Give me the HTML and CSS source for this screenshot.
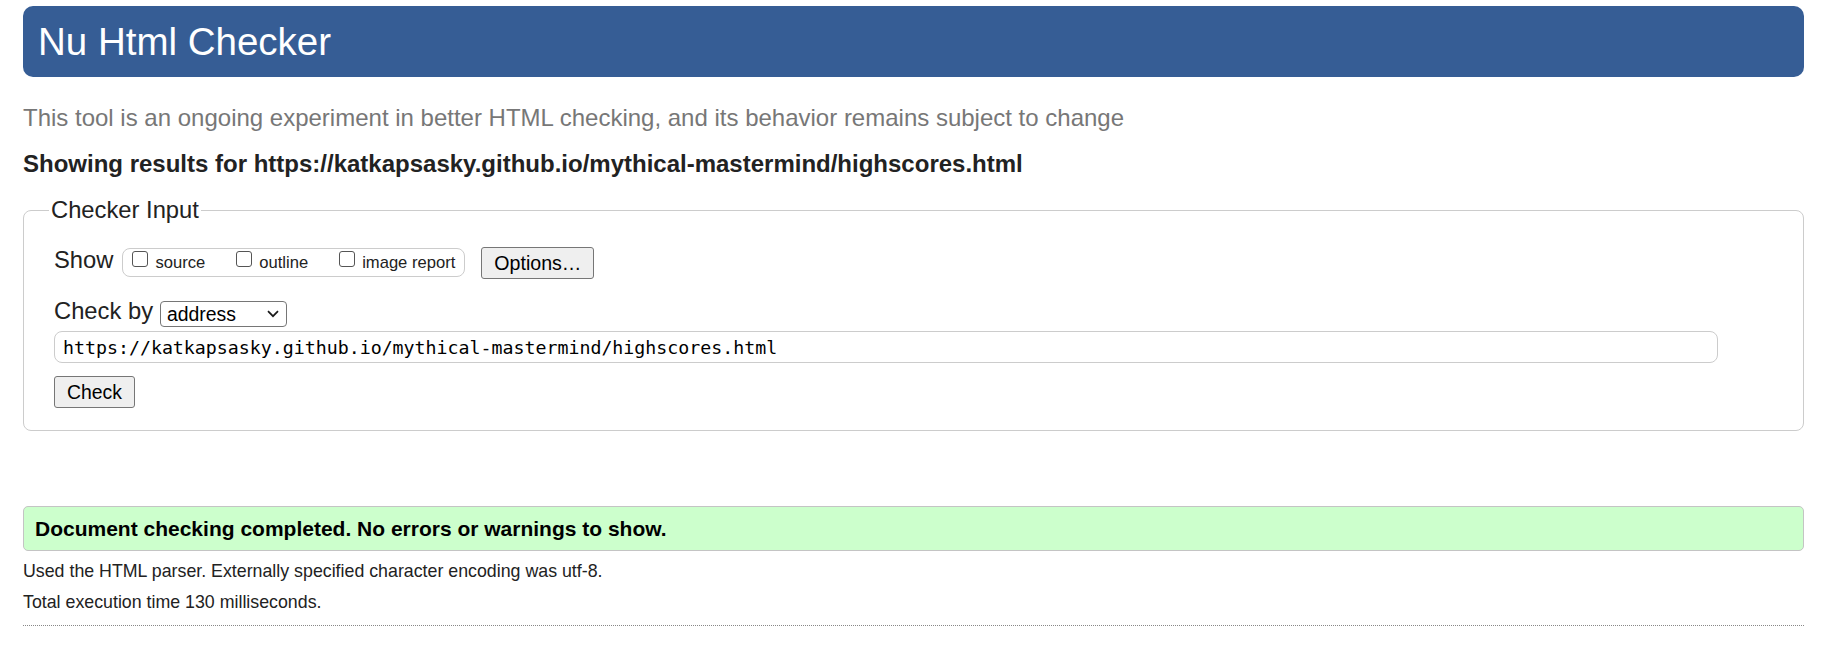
FILE: index.html
```html
<!DOCTYPE html>
<html lang="en">
<head>
<meta charset="utf-8">
<title>Nu Html Checker</title>
<link rel="stylesheet" href="styles.css">
</head>
<body>
<div class="page">
  <header class="masthead"><h1>Nu Html Checker</h1></header>
  <p class="tagline">This tool is an ongoing experiment in better HTML checking, and its behavior remains subject to change</p>
  <p class="results-for">Showing results for https://katkapsasky.github.io/mythical-mastermind/highscores.html</p>
  <form class="checker-form">
    <fieldset class="checker">
      <legend>Checker Input</legend>
      <div class="row show-row">
        <span class="row-label">Show</span>
        <span class="opts">
          <label><input type="checkbox">source</label>
          <label><input type="checkbox">outline</label>
          <label><input type="checkbox">image report</label>
        </span>
        <button type="button" class="btn options-btn">Options…</button>
      </div>
      <div class="row by-row">
        <label class="row-label by-label">Check by</label>
        <span class="select-wrap">
          <select class="by-select"><option>address</option></select>
          <svg class="chevron" width="12" height="8" viewBox="0 0 12 8" aria-hidden="true"><path d="M1 1.2 L6 6.2 L11 1.2" fill="none" stroke="#1a1a1a" stroke-width="1.7"/></svg>
        </span>
      </div>
      <input class="url" type="url" value="https://katkapsasky.github.io/mythical-mastermind/highscores.html">
      <button type="button" class="btn check-btn">Check</button>
    </fieldset>
  </form>
  <div class="success">Document checking completed. No errors or warnings to show.</div>
  <p class="details">Used the HTML parser. Externally specified character encoding was utf-8.</p>
  <p class="details">Total execution time 130 milliseconds.</p>
  <hr class="dotted">
</div>
</body>
</html>
```
FILE: styles.css
```css
html, body {
  margin: 0;
  background: #fff;
}
body {
  font-family: "Liberation Sans", Arial, sans-serif;
  color: #222;
}
.page {
  padding: 6px 36px 0 23px;
}
.masthead {
  height: 71px;
  background: #365d95;
  border-radius: 10px;
  display: flex;
  align-items: center;
  padding-left: 15px;
}
.masthead h1 {
  margin: 0;
  font-weight: normal;
  font-size: 38.5px;
  line-height: 71px;
  color: #fff;
}
.tagline {
  margin: 26px 0 0;
  font-size: 24px;
  line-height: 30px;
  color: #777;
}
.results-for {
  margin: 17px 0 0;
  font-weight: bold;
  font-size: 24px;
  line-height: 28px;
  color: #222;
}
.checker-form {
  margin: 18px 0 0;
}
.checker {
  margin: 0;
  min-width: 0;
  border: 1px solid #ccc;
  border-radius: 8px;
  padding: 0 30px 22px;
}
.checker legend {
  padding: 0 2px;
  margin-left: -5px;
  font-size: 23.75px;
  line-height: 28px;
  color: #222;
}
.row {
  display: flex;
  align-items: flex-start;
}
.show-row {
  margin-top: 23px;
}
.row-label {
  font-size: 23.75px;
  line-height: 26px;
}
.opts {
  margin: 1px 0 0 9px;
  height: 29px;
  box-sizing: border-box;
  border: 1px solid #ccc;
  border-radius: 8px;
  padding: 0 9px;
  display: flex;
  align-items: flex-start;
}
.opts label {
  display: flex;
  align-items: flex-start;
  font-size: 16.6px;
  line-height: 27px;
  margin-right: 31px;
}
.opts label:last-child {
  margin-right: 0;
}
.opts input {
  -webkit-appearance: none;
  appearance: none;
  width: 16px;
  height: 16px;
  box-sizing: border-box;
  margin: 2px 7px 0 0;
  border: 1px solid #555;
  border-radius: 3px;
  background: #fff;
}
.btn {
  font-family: "Liberation Sans", Arial, sans-serif;
  height: 32px;
  box-sizing: border-box;
  padding: 0 12px;
  border: 1px solid #767676;
  border-radius: 3px;
  background: #efefef;
  color: #000;
}
.options-btn {
  margin-left: 16px;
  font-size: 19.6px;
}
.by-row {
  margin-top: 22px;
}
.by-label {
  line-height: 20px;
}
.select-wrap {
  margin-left: 7px;
  display: inline-flex;
  align-items: center;
}
.by-select {
  -webkit-appearance: none;
  appearance: none;
  width: 127px;
  height: 26px;
  box-sizing: border-box;
  padding: 0 0 0 6px;
  font-family: "Liberation Sans", Arial, sans-serif;
  font-size: 19.4px;
  border: 1px solid #767676;
  border-radius: 4px;
  background: #fff;
  color: #000;
}
.chevron {
  margin-left: -20px;
  margin-right: 8px;
  pointer-events: none;
}
.url {
  display: block;
  margin: 4px 0 0;
  width: calc(100% - 55px);
  height: 32px;
  box-sizing: border-box;
  border: 1px solid #ccc;
  border-radius: 8px;
  padding: 0 8px;
  font-family: "DejaVu Sans Mono", "Liberation Mono", monospace;
  font-size: 18.25px;
  color: #000;
  background: #fff;
}
.check-btn {
  display: block;
  margin-top: 13px;
  font-size: 19.4px;
}
.success {
  margin-top: 75px;
  height: 45px;
  box-sizing: border-box;
  background: #ccffcc;
  border: 1px solid #c4c4c4;
  border-radius: 5px;
  padding: 0 11px;
  font-weight: bold;
  font-size: 21px;
  line-height: 43px;
  color: #000;
}
.details {
  margin: 10px 0 0;
  font-size: 17.8px;
  line-height: 21px;
  color: #222;
}
.dotted {
  margin: 12px 0 0;
  height: 0;
  border: 0;
  border-top: 1px dotted #888;
}
```
